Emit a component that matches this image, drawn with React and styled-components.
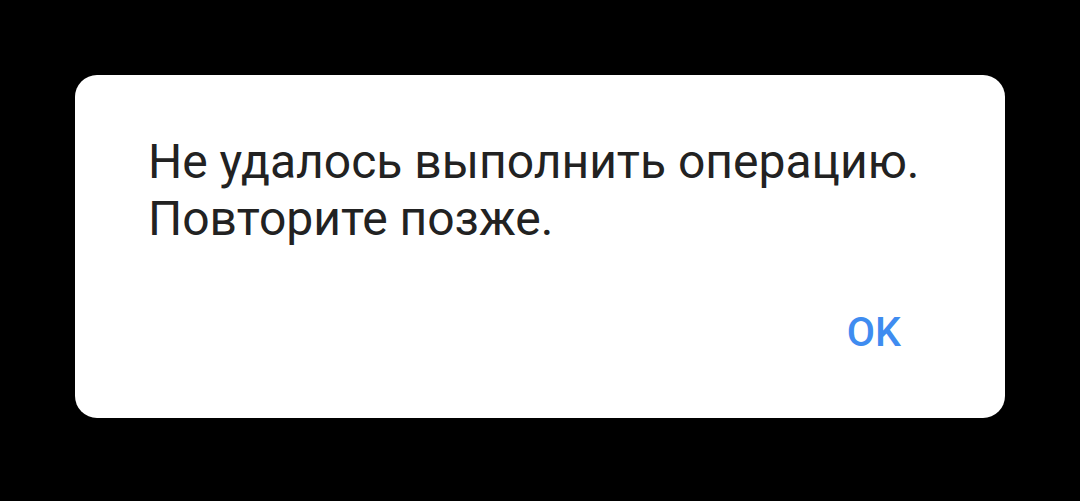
import React from 'react';
import styled, { createGlobalStyle } from 'styled-components';

const GlobalStyle = createGlobalStyle`
  html, body {
    margin: 0;
    padding: 0;
    background: #000;
  }
  body {
    font-family: Roboto, "Noto Sans", sans-serif;
  }
`;

const Screen = styled.div`
  width: 1080px;
  height: 501px;
  background: #000;
  padding: 75px 75px 0 75px;
  box-sizing: border-box;
`;

const Dialog = styled.div`
  width: 930px;
  height: 343px;
  background: #fff;
  border-radius: 22px;
  box-sizing: border-box;
  padding: 58px 73px 0 73px;
  display: flex;
  flex-direction: column;
`;

const Message = styled.div`
  font-size: 48px;
  line-height: 57px;
  color: #222;
  font-weight: 400;
`;

const Actions = styled.div`
  display: flex;
  justify-content: flex-end;
  margin-top: 61px;
  padding-right: 31px;
`;

const Button = styled.div`
  font-size: 41px;
  line-height: 48px;
  font-weight: 500;
  color: #3f8cf0;
  cursor: pointer;
`;

export default function App() {
  return (
    <>
      <GlobalStyle />
      <Screen>
        <Dialog>
          <Message>
            Не удалось выполнить операцию.
            <br />
            Повторите позже.
          </Message>
          <Actions>
            <Button>OK</Button>
          </Actions>
        </Dialog>
      </Screen>
    </>
  );
}
